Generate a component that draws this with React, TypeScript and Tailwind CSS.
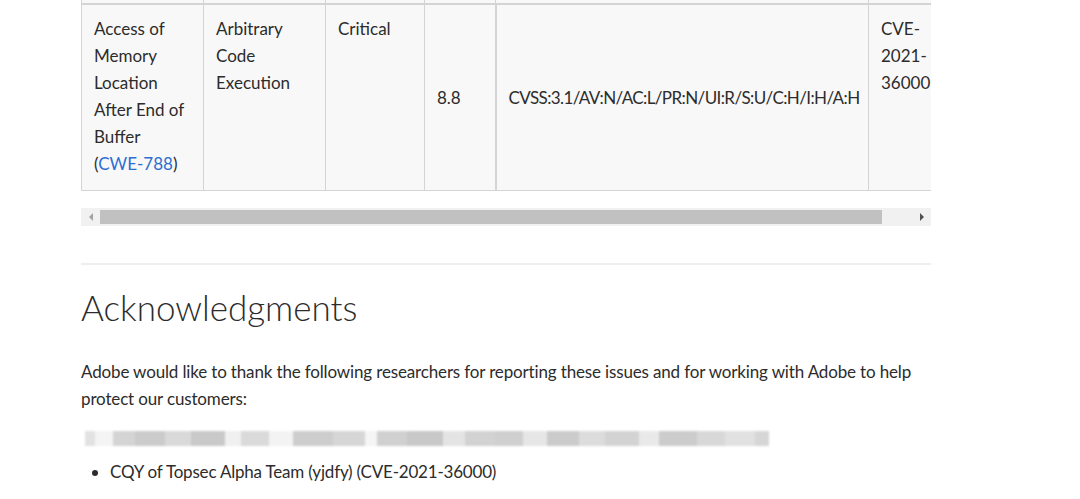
import React from 'react';

const blocks: { w: string; c: string }[] = [
    { w: 'w-[10px]', c: 'bg-[#e2e2e2]' },
    { w: 'w-[18px]', c: 'bg-[#f4f4f4]' },
    { w: 'w-[22px]', c: 'bg-[#d4d4d4]' },
    { w: 'w-[30px]', c: 'bg-[#cbcbcb]' },
    { w: 'w-[26px]', c: 'bg-[#d9d9d9]' },
    { w: 'w-[34px]', c: 'bg-[#c9c9c9]' },
    { w: 'w-[16px]', c: 'bg-[#f0f0f0]' },
    { w: 'w-[28px]', c: 'bg-[#dadada]' },
    { w: 'w-[24px]', c: 'bg-[#f3f3f3]' },
    { w: 'w-[40px]', c: 'bg-[#cdcdcd]' },
    { w: 'w-[32px]', c: 'bg-[#d6d6d6]' },
    { w: 'w-[12px]', c: 'bg-[#f5f5f5]' },
    { w: 'w-[30px]', c: 'bg-[#d0d0d0]' },
    { w: 'w-[36px]', c: 'bg-[#c8c8c8]' },
    { w: 'w-[22px]', c: 'bg-[#e4e4e4]' },
    { w: 'w-[30px]', c: 'bg-[#d2d2d2]' },
    { w: 'w-[28px]', c: 'bg-[#cfcfcf]' },
    { w: 'w-[24px]', c: 'bg-[#e6e6e6]' },
    { w: 'w-[32px]', c: 'bg-[#cbcbcb]' },
    { w: 'w-[26px]', c: 'bg-[#dcdcdc]' },
    { w: 'w-[34px]', c: 'bg-[#d3d3d3]' },
    { w: 'w-[20px]', c: 'bg-[#e9e9e9]' },
    { w: 'w-[38px]', c: 'bg-[#cccccc]' },
    { w: 'w-[28px]', c: 'bg-[#d8d8d8]' },
    { w: 'w-[30px]', c: 'bg-[#e1e1e1]' },
    { w: 'w-[14px]', c: 'bg-[#d6d6d6]' },
];

const cell = 'border border-[#d4d4d4] bg-[#f8f8f8] px-3 text-[17px] leading-[27px] text-[#2c2c2c]';

export default function App() {
    return (
        <div className="min-h-[499px] bg-white font-['Lato','Open_Sans',sans-serif]">
            <div className="ml-[81px] w-[850px]">
                {/* table, cut off on the right */}
                <div className="overflow-hidden">
                    <table className="w-[900px] table-fixed border-collapse">
                        <colgroup>
                            <col className="w-[122px]" />
                            <col className="w-[122px]" />
                            <col className="w-[99px]" />
                            <col className="w-[71px]" />
                            <col className="w-[373px]" />
                            <col className="w-[113px]" />
                        </colgroup>
                        <tbody>
                            <tr className="h-[4px]">
                                <td className="border-x border-[#d4d4d4] bg-[#f8f8f8]"></td>
                                <td className="border-x border-[#d4d4d4] bg-[#f8f8f8]"></td>
                                <td className="border-x border-[#d4d4d4] bg-[#f8f8f8]"></td>
                                <td className="border-x border-[#d4d4d4] bg-[#f8f8f8]"></td>
                                <td className="border-x border-[#d4d4d4] bg-[#f8f8f8]"></td>
                                <td className="border-x border-[#d4d4d4] bg-[#f8f8f8]"></td>
                            </tr>
                            <tr>
                                <td className={`${cell} border-t-2 pt-[10px] pb-[13px] align-top`}>
                                    Access of Memory Location After End of Buffer <span className="whitespace-nowrap">(<span className="text-[#2d6fd1]">CWE-788</span>)</span>
                                </td>
                                <td className={`${cell} border-t-2 pt-[10px] align-top`}>Arbitrary Code Execution</td>
                                <td className={`${cell} border-t-2 pt-[10px] align-top`}>Critical</td>
                                <td className={`${cell} border-t-2 border-r-2 align-middle`}>8.8</td>
                                <td className={`${cell} border-t-2 align-middle whitespace-nowrap tracking-[-0.6px]`}>CVSS:3.1/AV:N/AC:L/PR:N/UI:R/S:U/C:H/I:H/A:H</td>
                                <td className={`${cell} border-t-2 pt-[10px] align-top`}>CVE-<br />2021-<br />36000</td>
                            </tr>
                        </tbody>
                    </table>
                </div>

                {/* horizontal scrollbar */}
                <div className="mt-[17px] flex h-[18px] items-center bg-[#f1f1f1]">
                    <div className="flex w-[19px] justify-center">
                        <svg width="6" height="8" viewBox="0 0 6 8"><path d="M5 0 L1 4 L5 8 Z" fill="#a3a3a3" /></svg>
                    </div>
                    <div className="h-[14px] w-[782px] bg-[#c1c1c1]"></div>
                    <div className="flex-1"></div>
                    <div className="flex w-[19px] justify-center">
                        <svg width="6" height="8" viewBox="0 0 6 8"><path d="M1 0 L5 4 L1 8 Z" fill="#505050" /></svg>
                    </div>
                </div>

                <div className="mt-[37px] h-[2px] bg-[#eeeeee]"></div>

                <h2 className="mt-[21px] text-[35px] font-light leading-[42px] text-[#2c2c2c]">Acknowledgments</h2>

                <p className="mt-[30px] text-[17px] leading-[27px] tracking-[-0.15px] text-[#2c2c2c]">
                    Adobe would like to thank the following researchers for reporting these issues and for working with Adobe to help protect our customers:
                </p>

                {/* redacted line */}
                <div className="mt-[19px] ml-[4px] flex h-[15px] blur-[0.8px]">
                    {blocks.map((b, i) => (
                        <div key={i} className={`${b.w} ${b.c} h-full`}></div>
                    ))}
                </div>

                <ul className="mt-[12px] list-disc pl-[29px] text-[17px] leading-[27px] text-[#2c2c2c] marker:text-[#2c2c2c]">
                    <li className="tracking-[-0.2px]">CQY of Topsec Alpha Team (yjdfy) (CVE-2021-36000)</li>
                </ul>
            </div>
        </div>
    );
}
